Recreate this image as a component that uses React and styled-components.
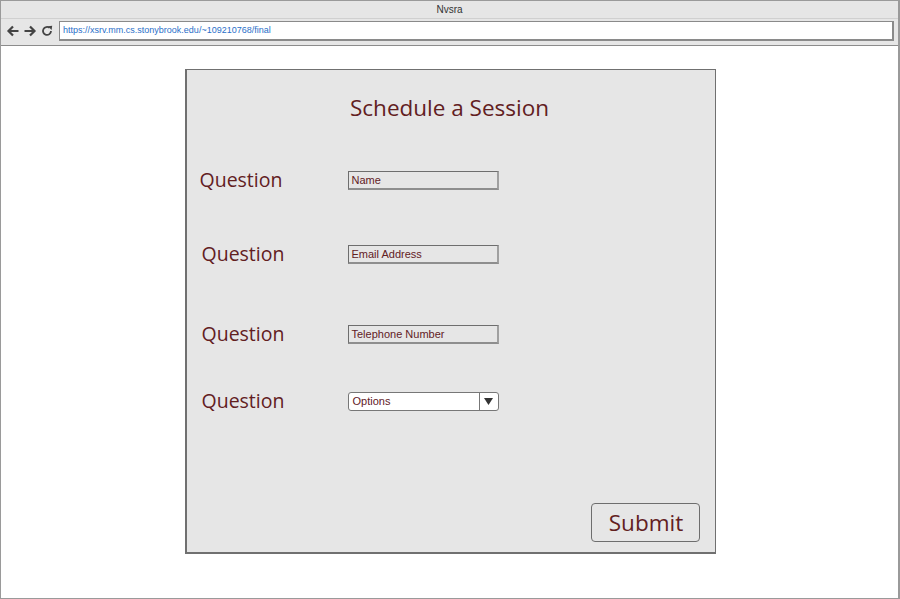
import styled, { createGlobalStyle } from 'styled-components';

const GlobalStyle = createGlobalStyle`
  html, body {
    margin: 0;
    padding: 0;
    background: #ffffff;
  }
  * { box-sizing: border-box; }
`;

const maroon = '#62201f';

const Window = styled.div`
  width: 900px;
  height: 599px;
  border: 1px solid #9a9a9a;
  border-right-width: 2px;
  display: flex;
  flex-direction: column;
  background: #fff;
  overflow: hidden;
`;

const Chrome = styled.div`
  background: #e6e6e6;
  border-bottom: 1px solid #8c8c8c;
  height: 45px;
  display: flex;
  flex-direction: column;
`;

const TitleBar = styled.div`
  height: 18px;
  display: flex;
  align-items: center;
  justify-content: center;
  font-family: 'Liberation Sans', Arial, sans-serif;
  font-size: 10px;
  color: #333;
  border-bottom: 1px solid #d0d0d0;
`;

const NavBar = styled.div`
  display: flex;
  align-items: center;
  gap: 3px;
  padding: 0 4px 0 5px;
  height: 23px;
`;

const NavIcon = styled.svg`
  width: 14px;
  height: 14px;
  flex: none;
`;

const Address = styled.div`
  flex: 1;
  height: 20px;
  margin-left: 2px;
  background: #fff;
  border: 1px solid #8a8a8a;
  border-bottom-width: 2px;
  border-right-width: 2px;
  display: flex;
  align-items: center;
  padding-left: 3px;
  font-family: 'Liberation Sans', Arial, sans-serif;
  font-size: 9px;
  color: #2a6fc9;
`;

const Page = styled.div`
  flex: 1;
  display: flex;
  justify-content: center;
  padding-top: 23px;
  padding-left: 1px;
`;

const Panel = styled.form`
  width: 531px;
  height: 485px;
  background: #e6e6e6;
  border: 1px solid #707070;
  border-left-width: 2px;
  border-bottom-width: 2px;
  display: flex;
  flex-direction: column;
  font-family: 'Open Sans', sans-serif;
  color: ${maroon};
`;

const Heading = styled.h1`
  margin: 22px 0 0;
  font-weight: 400;
  font-size: 22.5px;
  line-height: 32px;
  text-align: center;
  padding-right: 2px;
`;

const Rows = styled.div`
  display: flex;
  flex-direction: column;
  margin-top: 44px;
`;

const Row = styled.div`
  display: flex;
  align-items: center;
  height: 24px;
  margin-top: ${p => p.$gap || 0}px;
`;

const Label = styled.label`
  width: 161px;
  padding-left: ${p => p.$indent || 12}px;
  font-size: 19.5px;
  line-height: 24px;
  flex: none;
`;

const TextField = styled.div`
  width: 151px;
  height: 19px;
  border: 1px solid #6e6e6e;
  border-right-color: #a0a0a0;
  border-bottom: 2px solid #8e8e8e;
  border-right-width: 2px;
  background: #e6e6e6;
  font-family: 'Liberation Sans', Arial, sans-serif;
  font-size: 11px;
  line-height: 16px;
  padding-left: 3px;
  color: ${maroon};
`;

const Select = styled.div`
  width: 151px;
  height: 19px;
  border: 1px solid #777;
  border-radius: 3px;
  background: #fff;
  display: flex;
  font-family: 'Liberation Sans', Arial, sans-serif;
  font-size: 11px;
  color: ${maroon};
`;

const SelectText = styled.span`
  flex: 1;
  padding-left: 4px;
  line-height: 17px;
`;

const SelectArrow = styled.span`
  width: 19px;
  border-left: 1px solid #777;
  display: flex;
  align-items: center;
  justify-content: center;
`;

const Footer = styled.div`
  margin-top: auto;
  display: flex;
  justify-content: flex-end;
  padding: 0 15px 10px 0;
`;

const SubmitButton = styled.button`
  width: 109px;
  height: 39px;
  border: 1px solid #6e6e6e;
  border-radius: 4px;
  background: #e6e6e6;
  font-family: 'Open Sans', sans-serif;
  font-size: 22.5px;
  color: ${maroon};
  padding: 0 0 0 2px;
  line-height: 36px;
`;

const rows = [
  { field: 'Name', indent: 13, gap: 0 },
  { field: 'Email Address', indent: 15, gap: 50 },
  { field: 'Telephone Number', indent: 15, gap: 56 },
  { field: 'Options', indent: 15, gap: 43, select: true },
];

export default function App() {
  return (
    <>
      <GlobalStyle />
      <Window>
        <Chrome>
          <TitleBar>Nvsra</TitleBar>
          <NavBar>
            <NavIcon viewBox="0 0 14 14">
              <path d="M12.5 7H2.5M7 2.5L2.5 7L7 11.5" fill="none" stroke="#444" strokeWidth="2.2" />
            </NavIcon>
            <NavIcon viewBox="0 0 14 14">
              <path d="M1.5 7H11.5M7 2.5L11.5 7L7 11.5" fill="none" stroke="#444" strokeWidth="2.2" />
            </NavIcon>
            <NavIcon viewBox="0 0 14 14">
              <path d="M11 7A4 4 0 1 1 9.6 3.9" fill="none" stroke="#444" strokeWidth="1.8" />
              <path d="M8 2.2L12.2 1.8L11.6 6Z" fill="#444" />
            </NavIcon>
            <Address>https://xsrv.mm.cs.stonybrook.edu/~109210768/final</Address>
          </NavBar>
        </Chrome>
        <Page>
          <Panel>
            <Heading>Schedule a Session</Heading>
            <Rows>
              {rows.map(r => (
                <Row key={r.field} $gap={r.gap}>
                  <Label $indent={r.indent}>Question</Label>
                  {r.select ? (
                    <Select>
                      <SelectText>{r.field}</SelectText>
                      <SelectArrow>
                        <svg width="9" height="7" viewBox="0 0 9 7">
                          <path d="M0 0H9L4.5 7Z" fill="#333" />
                        </svg>
                      </SelectArrow>
                    </Select>
                  ) : (
                    <TextField>{r.field}</TextField>
                  )}
                </Row>
              ))}
            </Rows>
            <Footer>
              <SubmitButton type="button">Submit</SubmitButton>
            </Footer>
          </Panel>
        </Page>
      </Window>
    </>
  );
}
